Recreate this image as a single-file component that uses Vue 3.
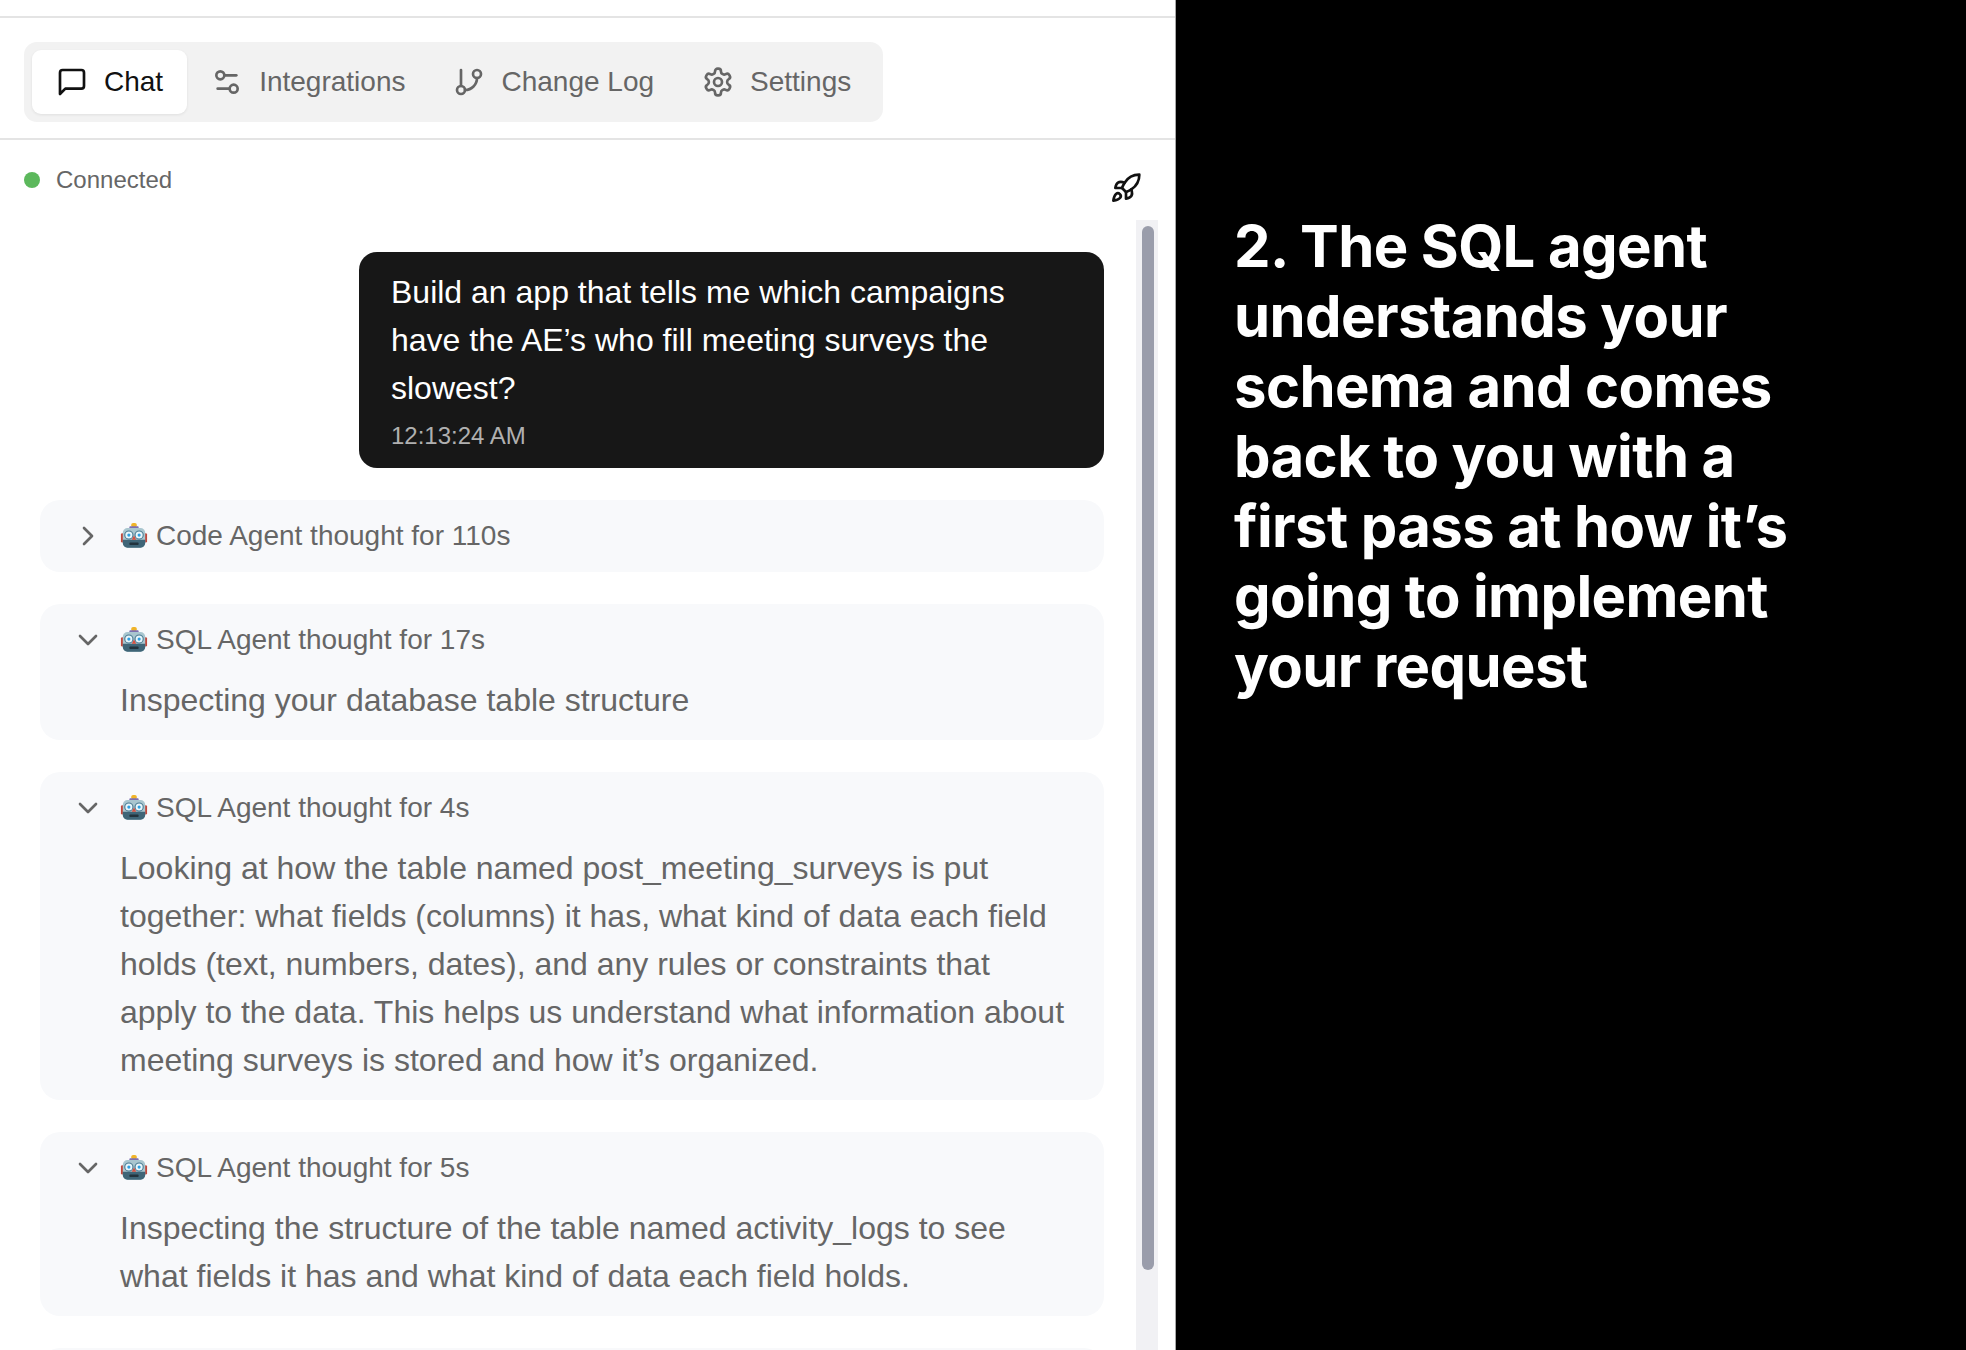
<script setup>
const tabs = [
  { name: 'Chat', icon: 'chat', active: true },
  { name: 'Integrations', icon: 'sliders' },
  { name: 'Change Log', icon: 'branch' },
  { name: 'Settings', icon: 'gear' }
]

const thoughts = [
  { title: 'Code Agent thought for 110s', open: false, lines: [] },
  { title: 'SQL Agent thought for 17s', open: true, lines: ['Inspecting your database table structure'] },
  {
    title: 'SQL Agent thought for 4s',
    open: true,
    lines: [
      'Looking at how the table named post_meeting_surveys is put',
      'together: what fields (columns) it has, what kind of data each field',
      'holds (text, numbers, dates), and any rules or constraints that',
      'apply to the data. This helps us understand what information about',
      'meeting surveys is stored and how it’s organized.'
    ]
  },
  {
    title: 'SQL Agent thought for 5s',
    open: true,
    lines: [
      'Inspecting the structure of the table named activity_logs to see',
      'what fields it has and what kind of data each field holds.'
    ]
  },
  { title: '', open: false, lines: [] }
]
</script>

<template>
  <div class="page">
    <div class="left">
      <div class="top-gap"></div>
      <div class="tabs-row">
        <div class="tabs">
          <div v-for="tab in tabs" :key="tab.name" class="tab" :class="{ active: tab.active }">
            <svg class="tab-icon" viewBox="0 0 24 24" fill="none" stroke="currentColor" stroke-width="2" stroke-linecap="round" stroke-linejoin="round">
              <path v-if="tab.icon == 'chat'" d="M21 15a2 2 0 0 1-2 2H7l-4 4V5a2 2 0 0 1 2-2h14a2 2 0 0 1 2 2z" />
              <template v-if="tab.icon == 'sliders'">
                <path d="M14 17H5" />
                <path d="M19 7h-9" />
                <circle cx="17" cy="17" r="3" />
                <circle cx="7" cy="7" r="3" />
              </template>
              <template v-if="tab.icon == 'branch'">
                <line x1="6" y1="3" x2="6" y2="15" />
                <circle cx="18" cy="6" r="3" />
                <circle cx="6" cy="18" r="3" />
                <path d="M18 9a9 9 0 0 1-9 9" />
              </template>
              <template v-if="tab.icon == 'gear'">
                <path d="M12.22 2h-.44a2 2 0 0 0-2 2v.18a2 2 0 0 1-1 1.73l-.43.25a2 2 0 0 1-2 0l-.15-.08a2 2 0 0 0-2.73.73l-.22.38a2 2 0 0 0 .73 2.73l.15.1a2 2 0 0 1 1 1.72v.51a2 2 0 0 1-1 1.74l-.15.09a2 2 0 0 0-.73 2.73l.22.38a2 2 0 0 0 2.73.73l.15-.08a2 2 0 0 1 2 0l.43.25a2 2 0 0 1 1 1.73V20a2 2 0 0 0 2 2h.44a2 2 0 0 0 2-2v-.18a2 2 0 0 1 1-1.73l.43-.25a2 2 0 0 1 2 0l.15.08a2 2 0 0 0 2.73-.73l.22-.39a2 2 0 0 0-.73-2.73l-.15-.08a2 2 0 0 1-1-1.74v-.5a2 2 0 0 1 1-1.74l.15-.09a2 2 0 0 0 .73-2.73l-.22-.38a2 2 0 0 0-2.73-.73l-.15.08a2 2 0 0 1-2 0l-.43-.25a2 2 0 0 1-1-1.73V4a2 2 0 0 0-2-2z" />
                <circle cx="12" cy="12" r="3" />
              </template>
            </svg>
            <span>{{ tab.name }}</span>
          </div>
        </div>
      </div>

      <div class="body">
        <div class="status-row">
          <div class="status">
            <span class="dot"></span>
            <span>Connected</span>
          </div>
          <svg class="rocket" viewBox="0 0 24 24" fill="none" stroke="#111" stroke-width="2" stroke-linecap="round" stroke-linejoin="round">
            <path d="M4.5 16.5c-1.5 1.26-2 5-2 5s3.74-.5 5-2c.71-.84.7-2.13-.09-2.91a2.18 2.18 0 0 0-2.91-.09z" />
            <path d="m12 15-3-3a22 22 0 0 1 2-3.95A12.88 12.88 0 0 1 22 2c0 2.72-.78 7.5-6 11a22.35 22.35 0 0 1-4 2z" />
            <path d="M9 12H4s.55-3.03 2-4c1.62-1.08 5 0 5 0" />
            <path d="M12 15v5s3.03-.55 4-2c1.08-1.62 0-5 0-5" />
          </svg>
        </div>

        <div class="scroll-area">
          <div class="messages">
            <div class="bubble">
              <div class="bubble-text">Build an app that tells me which campaigns</div>
              <div class="bubble-text">have the AE’s who fill meeting surveys the</div>
              <div class="bubble-text">slowest?</div>
              <div class="time">12:13:24 AM</div>
            </div>

            <div v-for="(item, index) in thoughts" :key="index" class="thought">
              <div v-if="item.title" class="thought-head">
                <svg class="chevron" viewBox="0 0 24 24" fill="none" stroke="currentColor" stroke-width="2" stroke-linecap="round" stroke-linejoin="round">
                  <path v-if="item.open" d="m6 9 6 6 6-6" />
                  <path v-else d="m9 18 6-6-6-6" />
                </svg>
                <svg class="robot" viewBox="1 1 30 30" role="img" aria-label="robot">
                  <rect x="13" y="2" width="6" height="4.5" rx="2" fill="#f0b429" />
                  <rect x="11" y="5.5" width="10" height="3" rx="1" fill="#7d6fb0" />
                  <rect x="2" y="13" width="3" height="10" rx="1.5" fill="#c0483c" />
                  <rect x="27" y="13" width="3" height="10" rx="1.5" fill="#c0483c" />
                  <rect x="4" y="7.5" width="24" height="21" rx="5" fill="#a9c6cf" />
                  <path d="M4 20h24v3.5a5 5 0 0 1-5 5H9a5 5 0 0 1-5-5z" fill="#3f6577" />
                  <circle cx="10.5" cy="15" r="4.4" fill="#e8f6fb" stroke="#4b7b92" stroke-width="1.2" />
                  <circle cx="21.5" cy="15" r="4.4" fill="#e8f6fb" stroke="#4b7b92" stroke-width="1.2" />
                  <circle cx="10.5" cy="15" r="1.7" fill="#2f9fe0" />
                  <circle cx="21.5" cy="15" r="1.7" fill="#2f9fe0" />
                  <path d="M16 15.5l2.4 4.5h-4.8z" fill="#d9503f" />
                  <rect x="11" y="23" width="10" height="2.6" rx="1" fill="#22333d" />
                </svg>
                <span>{{ item.title }}</span>
              </div>
              <div v-if="item.lines.length" class="thought-body">
                <div v-for="line in item.lines" :key="line">{{ line }}</div>
              </div>
            </div>
          </div>
          <div class="track">
            <div class="thumb"></div>
          </div>
        </div>
      </div>
    </div>

    <div class="right">
      <h1>2. The SQL agent<br>understands your<br>schema and comes<br>back to you with a<br>first pass at how it’s<br>going to implement<br>your request</h1>
    </div>
  </div>
</template>

<style scoped>
.page {
  display: flex;
  width: 1966px;
  height: 1350px;
  overflow: hidden;
  background: #fff;
  font-family: "Liberation Sans", Arial, sans-serif;
}

.left {
  width: 1176px;
  height: 1350px;
  flex-shrink: 0;
  border-right: 1px solid #a8a8a8;
  box-sizing: border-box;
  overflow: hidden;
}

.top-gap {
  height: 18px;
  box-sizing: border-box;
  border-bottom: 2px solid #e4e4e4;
}

.tabs-row {
  height: 122px;
  padding: 24px 0 0 24px;
  box-sizing: border-box;
  border-bottom: 2px solid #e4e4e4;
}

.tabs {
  display: inline-flex;
  align-items: center;
  height: 80px;
  padding: 0 8px;
  background: #f2f2f2;
  border-radius: 13px;
  box-sizing: border-box;
}

.tab {
  display: flex;
  align-items: center;
  gap: 16px;
  height: 64px;
  padding: 0 24px;
  font-size: 28px;
  color: #666;
  border-radius: 9px;
}

.tab.active {
  background: #fff;
  color: #111;
  box-shadow: 0 1px 3px rgba(0, 0, 0, 0.08);
}

.tab-icon {
  width: 32px;
  height: 32px;
  flex-shrink: 0;
}

.body {
  padding-left: 24px;
}

.status-row {
  display: flex;
  justify-content: space-between;
  width: 1118px;
  height: 80px;
}

.status {
  display: flex;
  align-items: center;
  gap: 16px;
  height: 48px;
  margin-top: 16px;
  font-size: 24px;
  color: #666;
}

.dot {
  width: 16px;
  height: 16px;
  border-radius: 50%;
  background: #5cb85c;
}

.rocket {
  width: 32px;
  height: 32px;
  margin-top: 32px;
}

.scroll-area {
  display: flex;
  align-items: flex-start;
  height: 1200px;
}

.messages {
  display: flex;
  flex-direction: column;
  gap: 32px;
  width: 1080px;
  padding: 32px 0 0 16px;
  box-sizing: border-box;
}

.bubble {
  align-self: flex-end;
  width: 745px;
  padding: 16px 32px 8px;
  box-sizing: border-box;
  background: #171717;
  border-radius: 18px;
  color: #fff;
}

.bubble-text {
  font-size: 32px;
  line-height: 48px;
}

.time {
  font-size: 24px;
  line-height: 48px;
  color: #b0b0b0;
}

.thought {
  background: #f8f9fb;
  border-radius: 20px;
  padding: 12px 32px;
  color: #666;
  min-height: 72px;
  box-sizing: border-box;
}

.thought-head {
  display: flex;
  align-items: center;
  height: 48px;
  font-size: 28px;
}

.chevron {
  width: 32px;
  height: 32px;
  flex-shrink: 0;
  margin-right: 16px;
}

.robot {
  width: 28px;
  height: 28px;
  flex-shrink: 0;
  margin-right: 8px;
}

.thought-body {
  padding: 12px 0 4px 48px;
  font-size: 32px;
  line-height: 48px;
}

.track {
  width: 22px;
  height: 1200px;
  margin-left: 32px;
  flex-shrink: 0;
  background: #f1f1f4;
  padding-top: 6px;
  box-sizing: border-box;
}

.thumb {
  width: 12px;
  height: 1044px;
  margin-left: 6px;
  border-radius: 6px;
  background: #9a9dab;
}

.right {
  flex: 1;
  background: #000;
  padding: 211px 0 0 58px;
  box-sizing: border-box;
}

h1 {
  margin: 0;
  font-family: Inter, "Liberation Sans", sans-serif;
  font-size: 58px;
  font-weight: 700;
  line-height: 70px;
  color: #fff;
  letter-spacing: -0.6px;
}
</style>

<style>
html, body {
  margin: 0;
  background: #fff;
}
</style>
